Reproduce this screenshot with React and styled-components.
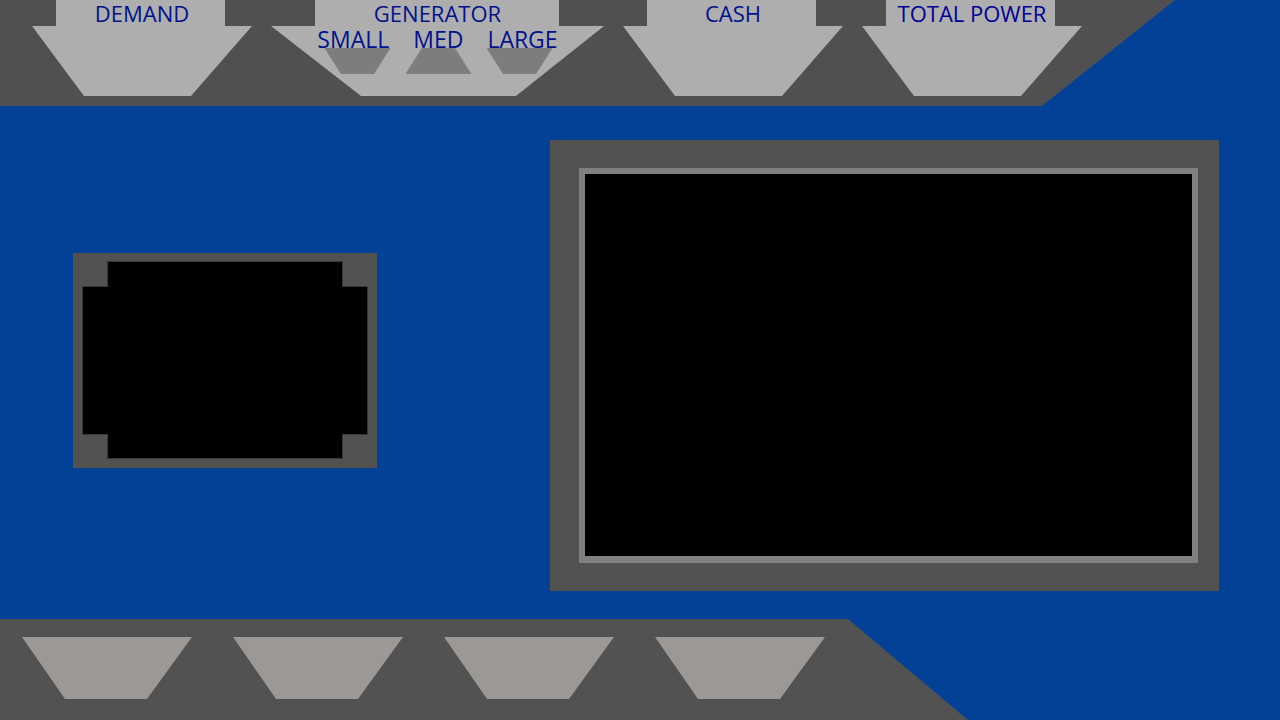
import React from "react";
import styled, { createGlobalStyle } from "styled-components";

const GlobalStyle = createGlobalStyle`
  *, *::before, *::after { box-sizing: border-box; }
  body {
    margin: 0;
    background: #034196;
    font-family: "Open Sans", "Noto Sans", sans-serif;
  }
`;

const Page = styled.div`
  display: flex;
  flex-direction: column;
  min-height: 100vh;
`;

const TopBar = styled.header`
  display: flex;
  gap: 19px;
  width: max-content;
  padding: 0 93px 10px 32px;
  background: #505052;
  clip-path: polygon(0 0, 100% 0, calc(100% - 133px) 100%, 0 100%);
`;

const Gauge = styled.section`
  display: flex;
  flex-direction: column;
  align-items: center;
  width: ${(p) => (p.$wide ? 333 : 220)}px;
  height: 96px;
  background: #aeaeae;
  --tab: ${(p) => (p.$wide ? 44 : 24)}px;
  --tab-end: ${(p) => (p.$wide ? 45 : 27)}px;
  --foot: ${(p) => (p.$wide ? 90 : 52)}px;
  --foot-end: ${(p) => (p.$wide ? 88 : 61)}px;
  clip-path: polygon(
    var(--tab) 0,
    calc(100% - var(--tab-end)) 0,
    calc(100% - var(--tab-end)) 26px,
    100% 26px,
    calc(100% - var(--foot-end)) 100%,
    var(--foot) 100%,
    0 26px,
    var(--tab) 26px
  );
`;

const Title = styled.h2`
  margin: 0;
  color: ${(p) => (p.$accent ? "#000096" : "#00128c")};
  font-size: 22px;
  font-weight: 400;
  line-height: 26px;
  white-space: nowrap;
`;

const SizeLabels = styled.div`
  display: flex;
  gap: 24px;
  height: 22px;
`;

const SizeLabel = styled.span`
  position: relative;
  z-index: 1;
  color: #00128c;
  font-size: 23px;
  line-height: 26px;
`;

const Slots = styled.div`
  display: flex;
  gap: 15px;
  padding-left: 2px;
`;

const Slot = styled.div`
  width: 66px;
  height: 26px;
  background: #7d7d7d;
  clip-path: ${(p) =>
    p.$raised
      ? "polygon(25% 0, 75% 0, 100% 100%, 0 100%)"
      : "polygon(0 0, 100% 0, 75% 100%, 25% 100%)"};
`;

const Main = styled.main`
  display: flex;
  flex: 1;
  gap: 173px;
  padding: 34px 61px 28px 73px;
`;

const SideColumn = styled.div`
  display: flex;
  flex: none;
  align-items: center;
  padding-bottom: 10px;
`;

const SidePanel = styled.section`
  width: 304px;
  height: 215px;
  padding: 8px 9px 9px;
  background: #525252;
`;

const notched = `
  clip-path: polygon(
    25px 0, calc(100% - 25px) 0, calc(100% - 25px) 25px, 100% 25px,
    100% calc(100% - 24px), calc(100% - 25px) calc(100% - 24px),
    calc(100% - 25px) 100%, 25px 100%,
    25px calc(100% - 24px), 0 calc(100% - 24px), 0 25px, 25px 25px
  );
`;

const NotchedEdge = styled.div`
  height: 100%;
  padding: 1px;
  background: #383838;
  ${notched}
`;

const NotchedScreen = styled.div`
  height: 100%;
  background: #000;
  ${notched}
`;

const MainPanel = styled.section`
  display: flex;
  flex: 1;
  min-width: 320px;
  min-height: 320px;
  padding: 28px 21px 28px 29px;
  background: #525252;
`;

const MainScreen = styled.div`
  flex: 1;
  background: #000;
  border: 6px solid #808080;
  border-bottom-width: 7px;
`;

const BottomBar = styled.footer`
  display: flex;
  gap: 41px;
  width: max-content;
  padding: 18px 143px 21px 22px;
  background: #525252;
  clip-path: polygon(0 0, calc(100% - 120px) 0, 100% 100%, 0 100%);
`;

const ActionButton = styled.button`
  width: 170px;
  height: 62px;
  padding: 0;
  border: 0;
  background: #9c9896;
  clip-path: polygon(0 0, 100% 0, calc(100% - 45px) 100%, 43px 100%);
  cursor: pointer;
`;

const sizes = ["SMALL", "MED", "LARGE"];
const actions = ["Action 1", "Action 2", "Action 3", "Action 4"];

export default function App() {
  return (
    <Page>
      <GlobalStyle />
      <TopBar>
        <Gauge>
          <Title>DEMAND</Title>
        </Gauge>
        <Gauge $wide>
          <Title>GENERATOR</Title>
          <SizeLabels>
            {sizes.map((size) => (
              <SizeLabel key={size}>{size}</SizeLabel>
            ))}
          </SizeLabels>
          <Slots>
            {sizes.map((size) => (
              <Slot key={size} $raised={size === "MED"} />
            ))}
          </Slots>
        </Gauge>
        <Gauge>
          <Title>CASH</Title>
        </Gauge>
        <Gauge>
          <Title $accent>TOTAL POWER</Title>
        </Gauge>
      </TopBar>
      <Main>
        <SideColumn>
          <SidePanel>
            <NotchedEdge>
              <NotchedScreen />
            </NotchedEdge>
          </SidePanel>
        </SideColumn>
        <MainPanel>
          <MainScreen />
        </MainPanel>
      </Main>
      <BottomBar>
        {actions.map((name) => (
          <ActionButton key={name} type="button" aria-label={name} />
        ))}
      </BottomBar>
    </Page>
  );
}
